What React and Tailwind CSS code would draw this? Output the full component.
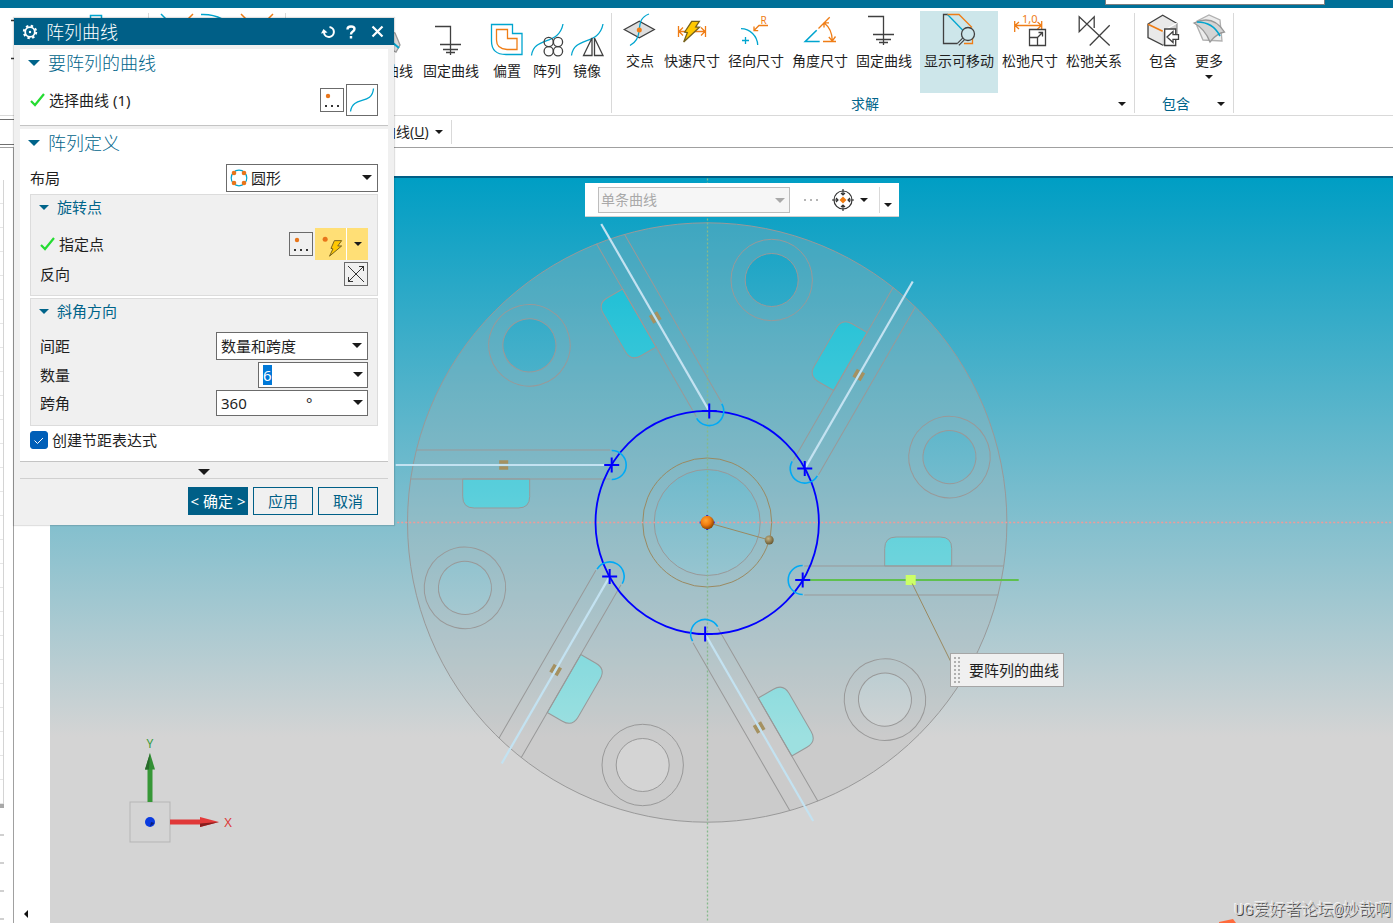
import React, { useEffect, useRef, useState } from 'react'

const ANGLES = [0, 60, 120, 180, 240, 300]

// Small solid triangle used by menus and drop-downs
function Caret({ className = 'text-[#1a1a1a]', size = 10 }) {
  return (
    <svg width={size} height={size / 2} viewBox="0 0 10 5" className={`shrink-0 ${className}`} aria-hidden="true">
      <path d="M0 0H10L5 5Z" fill="currentColor" />
    </svg>
  )
}

function Icon({ children, className = 'w-8 h-8' }) {
  return (
    <svg viewBox="0 0 32 32" className={`shrink-0 overflow-visible ${className}`} fill="none" strokeWidth="1.3" stroke="#404040" aria-hidden="true">
      {children}
    </svg>
  )
}

const BOLT = '15.7,7.3 23.3,7.3 19.7,13 23.5,13.3 7.7,28 11.3,18.7 8.7,18'

const icons = {
  surface: (
    <Icon>
      <path d="M2 6L12 9L17 21L13 28L2 22Z" fill="#d9d9d9" stroke="#9a9a9a" />
      <path d="M4 14L16 24" stroke="#00a5cf" strokeWidth="2" />
    </Icon>
  ),
  fixed: (
    <Icon>
      <path d="M0 2.5H15.5V31M5 20.5H26M8 25.5H23M11 28.5H20" />
    </Icon>
  ),
  offset: (
    <Icon>
      <path d="M.5 .5H21.5V9.5H31V30.5H15Q.5 30.5 .5 17Z" stroke="#00a5cf" />
      <path d="M5.5 5.5H16.5V14.5H26V25.5H16Q5.5 25 5.5 16Z" stroke="#ef7d16" />
    </Icon>
  ),
  pattern: (
    <Icon>
      <path d="M.5 31.5C3 12 28 22 32 0" stroke="#00a5cf" />
      <circle cx="17.7" cy="18" r="4.6" />
      <circle cx="27" cy="18" r="4.6" />
      <circle cx="17.7" cy="27.2" r="4.6" />
      <circle cx="27" cy="27.2" r="4.6" />
    </Icon>
  ),
  mirror: (
    <Icon>
      <path d="M.5 31.5C3 12 28 22 32 0" stroke="#00a5cf" />
      <path d="M21 14V31.5H12.5ZM23.5 14V31.5H32Z" fill="#fff" />
    </Icon>
  ),
  intersect: (
    <Icon>
      <path d="M.3 15.5L15.3 7.3L30.3 15.5L15.3 23.7Z" fill="#dedede" />
      <path d="M25 0C17 3 16 8 15.3 15.5C14.5 24 12 28 6 31.5" stroke="#00a5cf" />
      <circle cx="15.3" cy="16" r="2.5" fill="#ef7d16" stroke="none" />
    </Icon>
  ),
  rapid: (
    <Icon>
      <path d="M2.5 12V23M29.5 12V23M3 17.5H29M7 13.5L3 17.5L7 21.5M25 13.5L29 17.5L25 21.5" stroke="#ef7d16" />
      <polygon points={BOLT} fill="#ffc800" stroke="#75601c" />
    </Icon>
  ),
  radial: (
    <Icon>
      <path d="M1 14.7A17 17 0 0 1 17.7 31M5.5 23V30M2 26.5H9" stroke="#00a5cf" />
      <path d="M28 11.5H19L14 16.5M14 12.5V16.7H18.2" stroke="#ef7d16" />
      <text x="20.5" y="10" fontSize="10" fill="#ef7d16" stroke="none">R</text>
    </Icon>
  ),
  angular: (
    <Icon>
      <path d="M12.7 16.3L1.3 27.5H15.7" stroke="#00a5cf" strokeWidth="1.6" />
      <path d="M14.5 14.5L25.7 3.3M19 27.5H32M20.5 9.2Q28 15 28.3 26.5M20 13.5V8.8H25M24.8 23L28.3 27L31.5 22.5" stroke="#ef7d16" />
    </Icon>
  ),
  movable: (
    <Icon>
      <path d="M5 .5H.5V29.5H14" />
      <path d="M4.5 .5L20.5 17" stroke="#00a5cf" />
      <path d="M4.5 .5H16L29 13.5M29.5 24V29.5H21" stroke="#ef7d16" />
      <path d="M20.5 25L15 30.5" strokeWidth="3.6" />
      <path d="M20.5 25L15 30.5" stroke="#cde6ea" strokeWidth="1.2" />
      <circle cx="25" cy="20" r="6.5" fill="#cde6ea" />
    </Icon>
  ),
  relaxDim: (
    <Icon>
      <path d="M.7 7V18M27.7 7V15M1 11.5H27M5 8L1 11.5L5 15M23.5 8L27.5 11.5L23.5 15" stroke="#ef7d16" />
      <text x="8" y="8.5" fontSize="11" fill="#ef7d16" stroke="none">1,0</text>
      <path d="M15.5 15.5H31.5V31.5H15.5Z" fill="#fff" />
      <path d="M15.5 23.5H23.5V31.5M23.5 23.5L28.5 18.5M24.5 18.5H28.5V22.5" />
    </Icon>
  ),
  relaxRel: (
    <Icon>
      <path d="M31.7 31.5L1.2 2.7V17.7L16.2 2.7V14M31.7 11.3L11.7 31.5" />
    </Icon>
  ),
  include: (
    <Icon>
      <path d="M1 10L15.7 1.3L29.7 9.3V24.3L15.7 31L1 23.7Z" fill="#e9e9e9" />
      <path d="M15.7 17.3L29.7 9.3V24.3L15.7 31Z" fill="#cfcfcf" stroke="none" />
      <path d="M15.7 17.3L29.7 9.3" stroke="#fff" />
      <path d="M1 10.3L15.7 17.3" stroke="#ef7d16" strokeWidth="1.7" />
      <path d="M17.7 15H28.7V31.5H17.7Z" fill="#fff" />
      <path d="M31.5 20.7H26V17.5L20 23L26 28.5V25.3H31.5Z" fill="#fff" />
    </Icon>
  ),
  more: (
    <Icon>
      <path d="M4 7L16 1L27 6L29 27L10 26L4 12Z" fill="#ececec" stroke="#b0b0b0" />
      <path d="M1 9Q20 0 31.500 18Q24 19 17 28Q12 15 1 9Z" fill="#d4d4d4" stroke="#989898" />
      <path d="M4 8Q20 8 27 22" stroke="#00a5cf" strokeWidth="1.7" />
    </Icon>
  ),
}

const curveTools = [
  ['偏置', icons.offset],
  ['阵列', icons.pattern],
  ['镜像', icons.mirror],
]

const solveTools = [
  ['交点', icons.intersect],
  ['快速尺寸', icons.rapid],
  ['径向尺寸', icons.radial],
  ['角度尺寸', icons.angular],
  ['固定曲线', icons.fixed],
  ['显示可移动', icons.movable],
  ['松弛尺寸', icons.relaxDim],
  ['松弛关系', icons.relaxRel],
]

function RibbonButton({ label, icon, active, menu, wide = true }) {
  return (
    <button
      className={`flex h-[82px] shrink-0 flex-col items-center px-1 pt-[3px] ${wide ? 'min-w-10' : ''} ${
        active ? 'ml-1 bg-[#cde6ea]' : ''
      }`}
    >
      {icon}
      <span className="mt-[5px] text-sm leading-5 whitespace-nowrap">{label}</span>
      {menu && <Caret size={8} className="mt-1 text-[#1a1a1a]" />}
    </button>
  )
}

function GroupLabel({ children }) {
  return (
    <div className="flex h-[22px] items-center pr-2">
      <span className="flex-1 text-center text-sm leading-5 text-[#00648a]">{children}</span>
      <button aria-label={`${children}选项`}>
        <Caret size={8} />
      </button>
    </div>
  )
}

function Ribbon() {
  return (
    <div className="flex h-[108px] shrink-0 border-b border-[#d9d9d9] pt-[3px]">
      {/* Sketch tools at the far left */}
      <div className="w-[379px] shrink-0">
        <svg width="379" height="60" fill="none" strokeWidth="1.5" aria-hidden="true">
          <path d="M11 9.5H14M11 47.5H14" stroke="#333" />
          <path d="M90.500 10V4.500H101.500V10M161 3L167 9M201 3.500Q213 3 222 8" stroke="#00a5cf" />
          <path d="M193 3L187 9M241 3L247 9M273 3L267 9" stroke="#ef7d16" />
          <path d="M148.500 2V10M285.500 2V10" stroke="#d9d9d9" strokeWidth="1" />
        </svg>
      </div>
      <div className="flex shrink-0 pt-2.5 pr-1">
        <RibbonButton label="曲线" icon={icons.surface} wide={false} />
        <RibbonButton label="固定曲线" icon={icons.fixed} />
        <div className="flex pl-1">
          {curveTools.map(([label, icon]) => (
            <RibbonButton key={label} label={label} icon={icon} />
          ))}
        </div>
      </div>
      <div className="my-0.5 flex w-px shrink-0 bg-[#d9d9d9]" />
      <div className="flex shrink-0 flex-col">
        <div className="flex pr-2 pl-2">
          {solveTools.map(([label, icon]) => (
            <RibbonButton key={label} label={label} icon={icon} active={label === '显示可移动'} />
          ))}
        </div>
        <GroupLabel>求解</GroupLabel>
      </div>
      <div className="my-0.5 w-px shrink-0 bg-[#d9d9d9]" />
      <div className="flex shrink-0 flex-col">
        <div className="flex gap-1.5 pr-1 pl-2">
          <RibbonButton label="包含" icon={icons.include} />
          <RibbonButton label="更多" icon={icons.more} menu />
        </div>
        <GroupLabel>包含</GroupLabel>
      </div>
      <div className="my-0.5 w-px shrink-0 bg-[#d9d9d9]" />
    </div>
  )
}

function Check() {
  return (
    <svg width="15" height="14" viewBox="0 0 15 14" fill="none" className="shrink-0" aria-hidden="true">
      <path d="M1 8L5 12L14 1" stroke="#25dc32" strokeWidth="2.200" />
    </svg>
  )
}

function SectionTitle({ children, small }) {
  return (
    <button
      className={`flex w-full items-center gap-2 pl-2 text-left text-[#00648a] ${
        small ? 'h-6 text-[15px] leading-6' : 'h-7 text-lg leading-7 font-light'
      }`}
    >
      <Caret size={small ? 10 : 12} className="text-[#00648a]" />
      <span>{children}</span>
    </button>
  )
}

function PointDialogButton({ label }) {
  return (
    <button aria-label={label} className="h-6 w-6 shrink-0 border border-[#6b6b6b]">
      <svg viewBox="0 0 22 22" aria-hidden="true">
        <circle cx="7" cy="7" r="2.200" fill="#e8751a" />
        <path d="M4 16h2v2h-2zM10 16h2v2h-2zM16 16h2v2h-2z" fill="#333" />
      </svg>
    </button>
  )
}

function PatternDialog() {
  const [layout, setLayout] = useState('圆形')
  const [spacing, setSpacing] = useState('数量和跨度')
  const [count, setCount] = useState('6')
  const [span, setSpan] = useState('360')
  const [expr, setExpr] = useState(true)
  const countRef = useRef(null)

  useEffect(() => {
    countRef.current?.focus()
    countRef.current?.select()
  }, [])

  const field = 'w-full appearance-none border border-[#6b6b6b] bg-white text-[15px] leading-5 outline-none'

  return (
    <section className="absolute top-[18px] left-[14px] z-20 w-[380px] bg-[#f0f0f0] text-[15px] shadow-[0_0_1px_1px_rgba(0,0,0,0.12)]">
      <header className="flex h-[27px] items-center bg-[#005f87] px-2 text-white">
        <svg width="16" height="16" viewBox="0 0 16 16" fill="none" stroke="#fff" aria-hidden="true">
          <circle cx="8" cy="8" r="4.800" strokeWidth="1.800" />
          <circle cx="8" cy="8" r="6.200" strokeWidth="2" strokeDasharray="2.400 2.470" />
          <circle cx="8" cy="8" r="1.200" fill="#fff" stroke="none" />
        </svg>
        <h1 className="ml-2 flex-1 text-lg leading-6 font-light">阵列曲线</h1>
        <button aria-label="重置" className="mr-2.5">
          <svg width="14" height="14" viewBox="0 0 14 14" fill="none" stroke="#fff" strokeWidth="2" aria-hidden="true">
            <path d="M8.500 2A5 5 0 1 1 3 8" />
            <path d="M0 8.500L2.500 4L6.500 7.500Z" fill="#fff" stroke="none" />
          </svg>
        </button>
        <button aria-label="帮助" className="mr-3 w-3.5">
          <svg width="12" height="14" viewBox="0 0 12 14" fill="none" stroke="#fff" strokeWidth="2.400" aria-hidden="true">
            <path d="M2.500 4.500Q2.500 1.500 6 1.500Q9.500 1.500 9.500 4Q9.500 5.500 7.500 6.700Q6 7.600 6 9.500M6 11V13.500" />
          </svg>
        </button>
        <button aria-label="关闭" className="mr-0.5">
          <svg width="13" height="13" viewBox="0 0 13 13" stroke="#fff" strokeWidth="2.200" aria-hidden="true">
            <path d="M1.500 1.500L11.500 11.500M11.500 1.500L1.500 11.500" />
          </svg>
        </button>
      </header>

      <div className="px-1.5 pt-1">
        {/* Curve to pattern */}
        <div className="border-b border-[#c4c4c4] bg-white pb-[9px]">
          <SectionTitle>要阵列的曲线</SectionTitle>
          <div className="mt-[7px] flex h-8 items-center pr-2.5 pl-2.5">
            <Check />
            <span className="ml-1 flex-1">选择曲线 (1)</span>
            <PointDialogButton label="点对话框" />
            <button aria-label="曲线" className="ml-0.5 h-8 w-8 border border-[#6b6b6b]">
              <svg viewBox="0 0 30 30" fill="none" aria-hidden="true">
                <path d="M3.500 26.500C6 10 25 21 26.500 3.500" stroke="#00a5cf" strokeWidth="1.300" />
              </svg>
            </button>
          </div>
        </div>

        {/* Pattern definition */}
        <div className="mt-[3px] border-b border-[#c4c4c4] bg-white pb-3">
          <SectionTitle>阵列定义</SectionTitle>
          <div className="mt-[7px] flex h-7 items-center justify-between px-2.5">
            <label htmlFor="layout">布局</label>
            <div className="relative w-[152px]">
              <select id="layout" value={layout} onChange={(e) => setLayout(e.target.value)} className={`h-7 pl-6 ${field}`}>
                <option>圆形</option>
                <option>线性</option>
              </select>
              <svg width="18" height="18" viewBox="0 0 18 18" className="pointer-events-none absolute top-[5px] left-1" aria-hidden="true">
                <circle cx="9" cy="9" r="7.800" fill="none" stroke="#00a5cf" strokeWidth="1.200" />
                <g fill="#e8751a">
                  <circle cx="4" cy="4" r="2.300" />
                  <circle cx="14" cy="4" r="2.300" />
                  <circle cx="4" cy="14" r="2.300" />
                  <circle cx="14" cy="14" r="2.300" />
                </g>
              </svg>
              <Caret className="pointer-events-none absolute top-[11px] right-1.5 text-[#1a1a1a]" />
            </div>
          </div>

          <div className="mx-2.5 mt-0.5 border border-[#dcdcdc] bg-[#f0f0f0] pb-[9px]">
            <SectionTitle small>旋转点</SectionTitle>
            <div className="mt-[9px] flex h-8 items-center px-[9px]">
              <Check />
              <span className="ml-1 flex-1">指定点</span>
              <PointDialogButton label="指定点对话框" />
              <div className="ml-0.5 flex bg-[#ffdf76]">
                <button aria-label="自动判断点" className="h-8 w-8 border-r border-white">
                  <svg viewBox="0 0 32 32" aria-hidden="true">
                    <circle cx="10.500" cy="10.500" r="2.600" fill="#e8751a" />
                    <path d="M20 12H27.500L23.500 17.500H27.500L15 28L18.500 20.500L16.500 20Z" fill="#ffc800" stroke="#75601c" />
                  </svg>
                </button>
                <button aria-label="点类型" className="flex w-[21px] items-center justify-center">
                  <Caret size={8} />
                </button>
              </div>
            </div>
            <div className="mt-0.5 flex h-6 items-center justify-between px-[9px]">
              <span>反向</span>
              <button aria-label="反向" className="h-6 w-6 border border-[#6b6b6b]">
                <svg viewBox="0 0 22 22" fill="none" stroke="#333" aria-hidden="true">
                  <path d="M3 3L19 19M3 19L19 3M14 3.500H18.500V8M8 18.500H3.500V14" />
                </svg>
              </button>
            </div>
          </div>

          <div className="mx-2.5 mt-0.5 border border-[#dcdcdc] bg-[#f0f0f0] pb-[9px]">
            <SectionTitle small>斜角方向</SectionTitle>
            <div className="mt-[9px] flex flex-col gap-0.5 px-[9px]">
              <div className="flex h-7 items-center justify-between">
                <label htmlFor="spacing">间距</label>
                <div className="relative w-[152px]">
                  <select id="spacing" value={spacing} onChange={(e) => setSpacing(e.target.value)} className={`h-7 pl-1 ${field}`}>
                    <option>数量和跨度</option>
                    <option>数量和间隔</option>
                  </select>
                  <Caret className="pointer-events-none absolute top-[11px] right-1.5 text-[#1a1a1a]" />
                </div>
              </div>
              <div className="flex h-[26px] items-center justify-between">
                <label htmlFor="count">数量</label>
                <div className="relative w-[110px]">
                  <input
                    id="count"
                    ref={countRef}
                    value={count}
                    onChange={(e) => setCount(e.target.value)}
                    className={`h-[26px] pl-1 selection:bg-[#0078d7] selection:text-white ${field}`}
                  />
                  <Caret className="pointer-events-none absolute top-2.5 right-[5px] text-[#1a1a1a]" />
                </div>
              </div>
              <div className="flex h-[26px] items-center justify-between">
                <label htmlFor="span">跨角</label>
                <div className="relative flex w-[152px]">
                  <input id="span" value={span} onChange={(e) => setSpan(e.target.value)} className={`h-[26px] pl-1 ${field}`} />
                  <span className="pointer-events-none absolute top-0.5 left-[90px]">°</span>
                  <Caret className="pointer-events-none absolute top-2.5 right-[5px] text-[#1a1a1a]" />
                </div>
              </div>
            </div>
          </div>

          <label className="mx-2.5 mt-[5px] flex h-[18px] items-center gap-1">
            <span className="relative h-[18px] w-[18px]">
              <input
                type="checkbox"
                checked={expr}
                onChange={(e) => setExpr(e.target.checked)}
                className="block h-[18px] w-[18px] appearance-none rounded-[3px] border border-[#005fb8] bg-white checked:bg-[#005fb8]"
              />
              {expr && (
                <svg viewBox="0 0 18 18" fill="none" className="pointer-events-none absolute inset-0" aria-hidden="true">
                  <path d="M4.500 9.500L7.500 12.500L13 7" stroke="#fff" />
                </svg>
              )}
            </span>
            <span>创建节距表达式</span>
          </label>
        </div>

        <button aria-label="更多选项" className="flex h-[17px] w-full items-center justify-center border-b border-[#d0d0d0] pt-1">
          <Caret size={12} />
        </button>
      </div>

      <footer className="flex justify-end gap-[5px] px-4 pt-2 pb-2.5">
        <button className="h-7 w-[60px] bg-[#005f87] whitespace-nowrap text-white">&lt; 确定 &gt;</button>
        <button className="h-7 w-[60px] border border-[#005f87] text-[#005f87]">应用</button>
        <button className="h-7 w-[60px] border border-[#005f87] text-[#005f87]">取消</button>
      </footer>
    </section>
  )
}

// One sixth of the chuck: slot, pocket and bolt hole, drawn round the origin
function Sector({ angle }) {
  const base = angle === 0
  return (
    <g transform={`rotate(${angle})`}>
      <path d="M244.500 43.500V26Q244.500 14.500 233 14.500H189Q177.500 14.500 177.500 26V43.500Z" fill="#10ffff" fillOpacity=".28" stroke="#999" />
      <path d="M97 43.500H296.800M97 72.500H291" stroke="#999" />
      <circle cx="64.500" cy="-242.500" r="40.700" stroke="#999" />
      <circle cx="64.500" cy="-242.500" r="26.500" stroke="#999" />
      {!base && <path d="M199 54.500H208M199 60.500H208" stroke="#a59160" strokeWidth="3.500" />}
      <path d="M96 57.500H311.500" stroke={base ? '#5fc04f' : '#c3e2f1'} strokeWidth="2.200" />
      {base && <rect x="198.500" y="52.500" width="10" height="10" fill="#ccff66" />}
    </g>
  )
}

function Model() {
  return (
    <svg className="absolute inset-0 h-full w-full" fill="none" aria-label="模型视图">
      <defs>
        <radialGradient id="orangeBall" cx=".4" cy=".35" r=".7">
          <stop offset="0" stopColor="#ffa534" />
          <stop offset=".5" stopColor="#f07c10" />
          <stop offset="1" stopColor="#7d3c00" />
        </radialGradient>
        <radialGradient id="brownBall" cx=".4" cy=".35" r=".7">
          <stop offset="0" stopColor="#c5b485" />
          <stop offset="1" stopColor="#62532c" />
        </radialGradient>
        <mask id="holes" maskUnits="userSpaceOnUse" x="-310" y="-310" width="620" height="620">
          <circle r="300" fill="#fff" />
          <circle r="53" fill="#000" />
          {ANGLES.map((a) => (
            <g key={a} transform={`rotate(${a})`}>
              <circle cx="64.500" cy="-242.500" r="26.500" fill="#000" />
              <path d="M244.500 43.500V26Q244.500 14.500 233 14.500H189Q177.500 14.500 177.500 26V43.500Z" fill="#000" />
            </g>
          ))}
        </mask>
      </defs>

      <g transform="translate(657.200 344.500)">
        <circle r="299.700" fill="#b4b4b4" fillOpacity=".28" mask="url(#holes)" />
        <circle r="299.700" stroke="#999" />
        <circle r="53" stroke="#999" />
        <circle r="64.500" stroke="#9a8a62" />
        <path d="M-310 0H700" stroke="#f29a98" strokeWidth="1.500" strokeDasharray="2 2" />
        <path d="M.300 -344V400" stroke="#86b98c" strokeWidth="1.300" strokeDasharray="2 2" />
        {ANGLES.map((a) => (
          <Sector key={a} angle={a} />
        ))}
        <circle r="111.700" stroke="#00f" strokeWidth="1.800" />
        {ANGLES.map((a) => (
          <g key={a} transform={`rotate(${a})`}>
            <path d="M95.500 43A14.500 14.500 0 0 0 95.500 72" stroke="#00aaf5" strokeWidth="1.600" />
            <path transform={`translate(95.500 57.500) rotate(${-a})`} d="M-7.500 0H7.500M0 -7.500V7.500" stroke="#00f" strokeWidth="2" />
          </g>
        ))}
        <path d="M0 0L62 17.500M205 61L244 140" stroke="#9a8a62" />
        <path d="M-7.500 0H7.500M0 -7.500V7.500" stroke="#22d" strokeWidth="2" />
        <circle r="6.800" fill="url(#orangeBall)" />
        <circle cx="62" cy="17.500" r="4.500" fill="url(#brownBall)" />
      </g>

      {/* View triad */}
      <g transform="translate(100 644)">
        <rect x="-20" y="-20" width="40" height="40" stroke="#b5b5b5" />
        <path d="M-2.500 -20V-53H2.500V-20Z" fill="#369736" />
        <path d="M0 -69L5 -52.500H-5Z" fill="#328f34" />
        <path d="M0 -69L-5 -52.500H-1Z" fill="#28692a" />
        <path d="M20 -2.500H51V2.500H20Z" fill="#e03838" />
        <path d="M69 0L50 5V-5Z" fill="#e33a3a" />
        <path d="M69 0L50 5V1.500Z" fill="#871d1d" />
        <circle r="5" fill="#0a3be0" />
        <path d="M0 4.500L4.500 1L1 0Z" fill="#0a1f80" />
        <text x="0" y="-74" fontSize="12" textAnchor="middle" fill="#3a9a3a">Y</text>
        <text x="78" y="5" fontSize="13" textAnchor="middle" fill="#dd3a3a">X</text>
      </g>
    </svg>
  )
}

function SelectionBar() {
  return (
    <div className="absolute top-[5px] left-[535px] flex h-[34px] w-[314px] items-center border-b border-[#d0d0d0] bg-white pl-[13px]">
      <div className="relative w-48">
        <select
          disabled
          aria-label="曲线规则"
          className="h-[26px] w-full appearance-none border border-[#bdbdbd] bg-[#f6f6f6] pl-0.5 text-sm leading-5 text-[#a9a9a9] opacity-100"
        >
          <option>单条曲线</option>
        </select>
        <Caret className="pointer-events-none absolute top-[11px] right-[5px] text-[#a9a9a9]" />
      </div>
      <svg width="16" height="4" viewBox="0 0 16 4" fill="#b5b5b5" className="ml-3.5" aria-hidden="true">
        <path d="M0 1h2v2h-2zM6 1h2v2h-2zM12 1h2v2h-2z" />
      </svg>
      <button aria-label="捕捉点" className="ml-3 flex items-center gap-1.5">
        <svg width="22" height="22" viewBox="0 0 22 22" fill="none" stroke="#333" strokeWidth="1.200" aria-hidden="true">
          <circle cx="11" cy="11" r="9" />
          <path d="M11 0V6M11 22V16M0 11H6M22 11H16M9 4L11 6L13 4M9 18L11 16L13 18M4 9L6 11L4 13M18 9L16 11L18 13" />
          <path d="M11 7.500L14.500 11L11 14.500L7.500 11Z" fill="#f07c10" stroke="none" />
        </svg>
        <Caret size={8} />
      </button>
      <div className="ml-[11px] h-[26px] w-px bg-[#d9d9d9]" />
      <button aria-label="工具条选项" className="ml-1 pt-2.5">
        <Caret size={8} />
      </button>
    </div>
  )
}

function Dock() {
  return (
    <aside className="flex w-[14px] shrink-0 flex-col border-t border-r border-[#a0a0a0] pt-8">
      <div className="flex w-1 flex-col border-r border-[#d4d4d4]">
        {Array.from({ length: 26 }, (_, i) => (
          <div key={i} className="h-6 border-b border-[#e6e6e6]" />
        ))}
      </div>
      <div className="h-1 w-1 bg-[#a8a8a8]" />
      <div className="flex w-1 flex-col">
        {[0, 1, 2, 3].map((i) => (
          <div key={i} className="h-7 border-b-2 border-[#d0d0d0]" />
        ))}
      </div>
    </aside>
  )
}

export default function App() {
  return (
    <div className="relative flex h-screen flex-col overflow-hidden bg-white font-['Noto_Sans','Noto_Sans_CJK_SC',sans-serif] text-[#1f1f1f]">
      <div className="flex h-2 shrink-0 items-start justify-end bg-[#007098] pr-[68px]">
        <div className="h-[5px] w-[220px] border-x border-b border-[#808080] bg-white" />
      </div>

      <Ribbon />

      {/* Menu bar */}
      <div className="flex h-[31px] shrink-0 items-center">
        <div className="mr-[368px] h-[26px] w-[14px] shrink-0 border-y border-[#707070]" />
        <button className="flex items-center gap-1.5 pr-2 text-sm leading-5">
          <span>
            曲线(<u>U</u>)
          </span>
          <Caret size={8} />
        </button>
        <div className="h-6 w-px bg-[#d9d9d9]" />
      </div>

      <div className="flex min-h-0 flex-1">
        <Dock />
        <div className="flex min-w-0 flex-1 flex-col border-t border-[#a0a0a0]">
          <div className="h-7 shrink-0" />
          <div className="flex min-h-0 flex-1 border-t-2 border-[#005f87]">
            <div className="flex w-9 shrink-0 items-end bg-white pb-1 pl-2.5">
              <button aria-label="折叠">
                <svg width="4" height="8" viewBox="0 0 4 8" className="my-px" aria-hidden="true">
                  <path d="M4 0V8L0 4Z" fill="#111" />
                </svg>
              </button>
            </div>
            <main className="relative min-w-0 flex-1 overflow-hidden bg-[linear-gradient(to_bottom,#009ec4_0%,#d4d4d4_75%)]">
              <Model />
              <SelectionBar />
              <div className="absolute top-[475px] left-[900px] flex h-[34px] items-center gap-2 border border-[#a6a6a6] bg-[#f0f0f0] pr-1 pl-0.5">
                <svg width="8" height="28" viewBox="0 0 8 28" aria-hidden="true">
                  <path d="M2 1V28M6 1V28" stroke="#b0b0b0" strokeWidth="2" strokeDasharray="2 2" />
                </svg>
                <span className="text-[15px] leading-5 whitespace-nowrap">要阵列的曲线</span>
              </div>
              <svg width="18" height="4" viewBox="0 0 18 4" className="absolute bottom-0 left-[1169px]" aria-hidden="true">
                <path d="M0 3L14 0L17 4H0Z" fill="#ff6a3c" />
              </svg>
              <div className="absolute right-0.5 bottom-0 font-['Liberation_Mono','Noto_Sans_CJK_SC',monospace] text-base leading-6 font-light whitespace-nowrap text-[#d4d4d4] [text-shadow:1px_1px_0_#444,-1px_-1px_0_#f4f4f4]">
                UG爱好者论坛@妙哉啊
              </div>
            </main>
          </div>
        </div>
      </div>

      <PatternDialog />
    </div>
  )
}
